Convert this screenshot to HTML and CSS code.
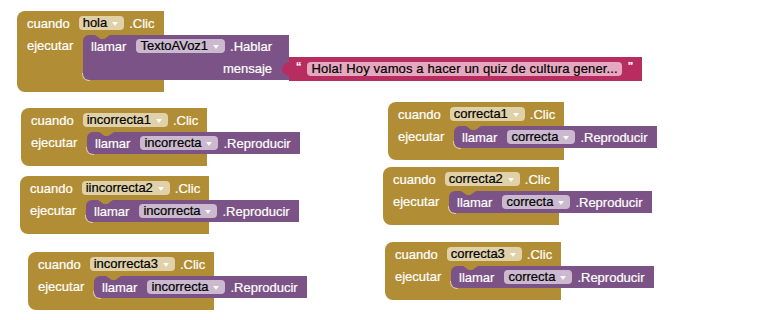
FILE: index.html
```html
<!DOCTYPE html>
<html lang="es">
<head>
<meta charset="utf-8">
<title>Bloques</title>
<link rel="stylesheet" href="styles.css">
</head>
<body>
<div class="canvas">

  <div class="event ev-a">
    <div class="head">cuando <span class="field f-gold">hola<i class="arrow"></i></span><span class="after">.Clic</span></div>
    <div class="body">
      <div class="label">ejecutar</div>
      <div class="slot">
        <div class="stmt">
          <div class="row row-pad">llamar <span class="field f-purple">TextoAVoz1<i class="arrow"></i></span><span class="after">.Hablar</span></div>
          <div class="row row-input">mensaje<span class="socket"></span>
            <div class="vslot">
              <div class="text-block">
                <span class="quote">&ldquo;</span>
                <span class="tfield">Hola! Hoy vamos a hacer un quiz de cultura gener...</span>
                <span class="quote q-right">&rdquo;</span>
              </div>
            </div>
          </div>
        </div>
      </div>
    </div>
    <div class="foot"></div>
  </div>

  <div class="event ev-b">
    <div class="head">cuando <span class="field f-gold">incorrecta1<i class="arrow"></i></span><span class="after">.Clic</span></div>
    <div class="body">
      <div class="label">ejecutar</div>
      <div class="slot">
        <div class="stmt">
          <div class="row">llamar <span class="field f-purple">incorrecta<i class="arrow"></i></span><span class="after">.Reproducir</span></div>
        </div>
      </div>
    </div>
    <div class="foot"></div>
  </div>

  <div class="event ev-c">
    <div class="head">cuando <span class="field f-gold">iincorrecta2<i class="arrow"></i></span><span class="after">.Clic</span></div>
    <div class="body">
      <div class="label">ejecutar</div>
      <div class="slot">
        <div class="stmt">
          <div class="row">llamar <span class="field f-purple">incorrecta<i class="arrow"></i></span><span class="after">.Reproducir</span></div>
        </div>
      </div>
    </div>
    <div class="foot"></div>
  </div>

  <div class="event ev-d">
    <div class="head">cuando <span class="field f-gold">incorrecta3<i class="arrow"></i></span><span class="after">.Clic</span></div>
    <div class="body">
      <div class="label">ejecutar</div>
      <div class="slot">
        <div class="stmt">
          <div class="row">llamar <span class="field f-purple">incorrecta<i class="arrow"></i></span><span class="after">.Reproducir</span></div>
        </div>
      </div>
    </div>
    <div class="foot"></div>
  </div>

  <div class="event ev-e">
    <div class="head">cuando <span class="field f-gold">correcta1<i class="arrow"></i></span><span class="after">.Clic</span></div>
    <div class="body">
      <div class="label">ejecutar</div>
      <div class="slot">
        <div class="stmt">
          <div class="row">llamar <span class="field f-purple">correcta<i class="arrow"></i></span><span class="after">.Reproducir</span></div>
        </div>
      </div>
    </div>
    <div class="foot"></div>
  </div>

  <div class="event ev-f">
    <div class="head">cuando <span class="field f-gold">correcta2<i class="arrow"></i></span><span class="after">.Clic</span></div>
    <div class="body">
      <div class="label">ejecutar</div>
      <div class="slot">
        <div class="stmt">
          <div class="row">llamar <span class="field f-purple">correcta<i class="arrow"></i></span><span class="after">.Reproducir</span></div>
        </div>
      </div>
    </div>
    <div class="foot"></div>
  </div>

  <div class="event ev-g">
    <div class="head">cuando <span class="field f-gold">correcta3<i class="arrow"></i></span><span class="after">.Clic</span></div>
    <div class="body">
      <div class="label">ejecutar</div>
      <div class="slot">
        <div class="stmt">
          <div class="row">llamar <span class="field f-purple">correcta<i class="arrow"></i></span><span class="after">.Reproducir</span></div>
        </div>
      </div>
    </div>
    <div class="foot"></div>
  </div>

</div>
</body>
</html>
```

FILE: styles.css
```css
html, body {
  margin: 0;
  padding: 0;
  background: #ffffff;
}

.canvas {
  position: relative;
  width: 764px;
  height: 320px;
  overflow: hidden;
  background: #ffffff;
  font-family: "Liberation Sans", Arial, sans-serif;
  font-size: 13px;
  color: #ffffff;
  -webkit-text-stroke: 0.2px currentColor;
}

/* ---------- event (C-shaped) block ---------- */
.event {
  position: absolute;
  display: flex;
  flex-direction: column;
  width: max-content;
}

.ev-a { left: 17px;  top: 11px; }
.ev-b { left: 21px;  top: 108px; }
.ev-c { left: 20px;  top: 176px; }
.ev-d { left: 28px;  top: 252px; }
.ev-e { left: 388px; top: 102px; }
.ev-f { left: 383px; top: 167px; }
.ev-g { left: 385px; top: 242px; }

.head {
  display: flex;
  align-items: center;
  height: 24px;
  padding: 0 9px 0 10px;
  background: #b18e35;
  border-top-left-radius: 8px;
  white-space: nowrap;
}

.body {
  display: flex;
}

.label {
  width: 66px;
  box-sizing: border-box;
  padding-left: 10px;
  line-height: 22px;
  background: #b18e35;
  white-space: nowrap;
}

.slot {
  flex: 1 0 0;
  width: 0;
  background: #b18e35;
}

.foot {
  position: relative;
  height: 12px;
  background: #b18e35;
  border-bottom-left-radius: 8px;
}

.foot::before {
  content: "";
  position: absolute;
  left: 65px;
  top: -7px;
  width: 7px;
  height: 7px;
  border-left: 1px solid rgba(255, 255, 255, 0.55);
  border-bottom: 1px solid rgba(255, 255, 255, 0.55);
  border-bottom-left-radius: 7px;
}

/* ---------- statement (purple) block ---------- */
.stmt {
  position: relative;
  display: flex;
  flex-direction: column;
  width: max-content;
  background: #7c5386;
  border-radius: 6px 0 0 6px;
}

.stmt::before {
  content: "";
  position: absolute;
  left: 12px;
  top: 0;
  width: 15px;
  height: 4px;
  background: #b18e35;
  clip-path: polygon(0 0, 100% 0, 62% 100%, 38% 100%);
}

.stmt::after {
  content: "";
  position: absolute;
  left: 12px;
  top: 100%;
  width: 15px;
  height: 4px;
  background: #7c5386;
  clip-path: polygon(0 0, 100% 0, 62% 100%, 38% 100%);
}

.row {
  display: flex;
  align-items: center;
  height: 22px;
  padding: 0 9px 0 8px;
  white-space: nowrap;
}

.row-pad {
  padding-right: 17px;
}

.row-input {
  justify-content: flex-end;
  align-items: flex-start;
  height: 23px;
  padding-right: 0;
  line-height: 23px;
}

.socket {
  width: 17px;
  flex: 0 0 auto;
}

.vslot {
  width: 0;
  flex: 0 0 0;
}

/* ---------- fields ---------- */
.field {
  display: inline-flex;
  align-items: center;
  height: 14px;
  line-height: 14px;
  padding: 0 6px 0 4px;
  border-radius: 4px;
  color: #000000;
  white-space: nowrap;
}

.head .field { margin: 0 5px 0 9px; }
.row .field  { margin: 0 5px 0 10px; }

.f-gold   { background: #e0d1a8; }
.f-purple { background: #cbb9cf; }

.arrow {
  display: inline-block;
  margin-left: 5px;
  margin-top: 1px;
  width: 0;
  height: 0;
  border-left: 3px solid transparent;
  border-right: 3px solid transparent;
  border-top: 4px solid rgba(255, 255, 255, 0.9);
}

/* ---------- text (pink) block ---------- */
.text-block {
  position: relative;
  display: flex;
  align-items: center;
  width: max-content;
  height: 24px;
  padding: 0 9px 0 7px;
  background: #b72d5f;
  line-height: 14px;
}

.text-block::before {
  content: "";
  position: absolute;
  left: -7px;
  top: 5px;
  width: 8px;
  height: 14px;
  background: #b72d5f;
  border-radius: 8px 0 0 8px / 7px 0 0 7px;
}

.tfield {
  display: inline-flex;
  align-items: center;
  height: 14px;
  line-height: 14px;
  padding: 0 4px 0 5px;
  border-radius: 4px;
  background: #e5a8bf;
  color: #000000;
  letter-spacing: 0.14px;
  white-space: nowrap;
}

.quote {
  align-self: flex-start;
  margin-top: 4px;
  margin-right: 5px;
  font-size: 11px;
  line-height: 11px;
  font-weight: bold;
  color: #ffffff;
}

.q-right {
  margin-right: 0;
  margin-left: 6px;
}
```
